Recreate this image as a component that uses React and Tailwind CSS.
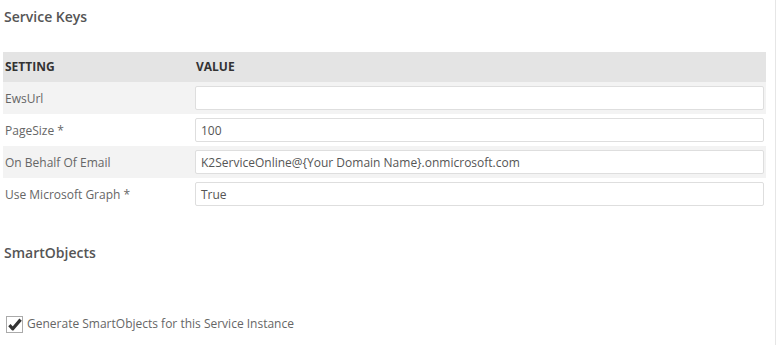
import React from 'react';

const rows = [
  { label: 'EwsUrl', value: '' },
  { label: 'PageSize *', value: '100' },
  { label: 'On Behalf Of Email', value: 'K2ServiceOnline@{Your Domain Name}.onmicrosoft.com' },
  { label: 'Use Microsoft Graph *', value: 'True' },
];

const App = () => {
  return (
    <div className="w-[777px] h-[345px] bg-white overflow-hidden font-['Open_Sans',sans-serif]">
      <div className="w-[776px] h-full border-r border-[#e6e6e6] pl-[3px] pr-[9px]">
        {/* Service keys */}
        <h2 className="pt-[7px] pl-[1px] text-[14px] font-semibold text-[#555] leading-[20px]">Service Keys</h2>
        <div className="mt-[25px]">
          <div className="flex h-[30px] items-center bg-[#e4e4e4] text-[12px] font-bold text-[#333]">
            <div className="w-[192px] pl-[2px]">SETTING</div>
            <div className="pl-[1px]">VALUE</div>
          </div>
          {rows.map((row, i) => (
            <div
              key={row.label}
              className={`flex h-[32px] items-center text-[12px] text-[#666] ${i % 2 === 0 ? 'bg-[#f3f3f3]' : 'bg-white'}`}
            >
              <div className="w-[192px] pl-[2px] pt-[1px]">{row.label}</div>
              <div className="flex-1 pr-[2px]">
                <div className="h-[24px] rounded-[2px] border border-[#dedede] bg-white px-[5px] leading-[23px] text-[#555]">
                  {row.value}
                </div>
              </div>
            </div>
          ))}
        </div>

        {/* SmartObjects */}
        <h2 className="mt-[33px] pl-[1px] text-[14px] font-semibold text-[#555] leading-[20px]">SmartObjects</h2>
        <label className="mt-[52px] flex items-center gap-[4px] pl-[3px] text-[12px] text-[#666]">
          <span className="flex h-[17px] w-[17px] items-center justify-center border border-[#aaa] bg-white">
            <svg width="14" height="13" viewBox="0 0 14 13">
              <path d="M1.4 7.2 L4.8 10.8 L12.6 1.6" fill="none" stroke="#333" strokeWidth="3.2" strokeLinejoin="round" />
            </svg>
          </span>
          Generate SmartObjects for this Service Instance
        </label>
      </div>
    </div>
  );
};

export default App;
